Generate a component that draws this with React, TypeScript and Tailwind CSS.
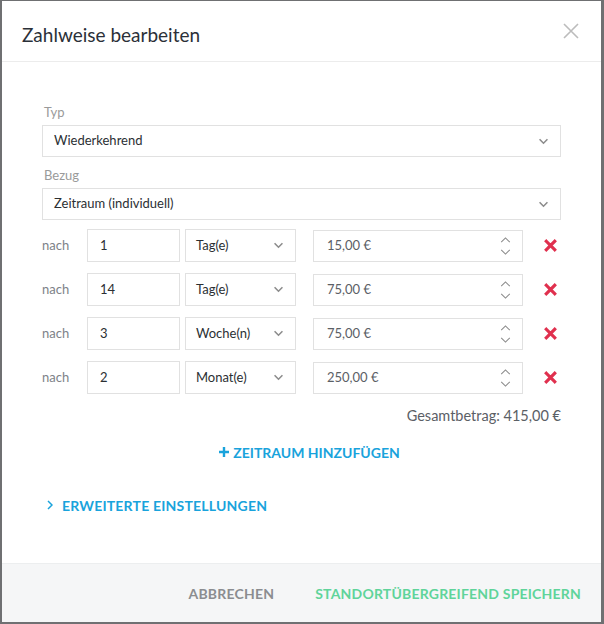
import { useState } from "react";

type Row = { amount: string; unit: string; price: string };

const rows: Row[] = [
  { amount: "1", unit: "Tag(e)", price: "15,00 €" },
  { amount: "14", unit: "Tag(e)", price: "75,00 €" },
  { amount: "3", unit: "Woche(n)", price: "75,00 €" },
  { amount: "2", unit: "Monat(e)", price: "250,00 €" },
];

const ChevronDown = ({ className = "" }: { className?: string }) => (
  <svg viewBox="0 0 12 8" className={className} fill="none" stroke="currentColor" strokeWidth="1.8">
    <path d="M1.5 1.5 6 6l4.5-4.5" />
  </svg>
);

const SelectBox = ({ value, className = "" }: { value: string; className?: string }) => (
  <div className={`flex items-center justify-between border border-[#e1e1e1] bg-white text-[13px] text-[#2b2f33] ${className}`}>
    <span>{value}</span>
    <ChevronDown className="w-[11px] h-[7px] text-[#8c8c8c]" />
  </div>
);

const Spinner = () => (
  <div className="flex flex-col items-center gap-[6px] text-[#8a8a8a]">
    <svg viewBox="0 0 12 7" className="w-[11px] h-[6px]" fill="none" stroke="currentColor" strokeWidth="1.2">
      <path d="M1 6 6 1l5 5" />
    </svg>
    <svg viewBox="0 0 12 7" className="w-[11px] h-[6px]" fill="none" stroke="currentColor" strokeWidth="1.2">
      <path d="M1 1l5 5 5-5" />
    </svg>
  </div>
);

const DeleteIcon = () => (
  <svg viewBox="0 0 14 14" className="w-[13px] h-[13px] text-[#e0304e]" fill="none" stroke="currentColor" strokeWidth="3.4" strokeLinecap="square">
    <path d="M2.5 2.5l9 9M11.5 2.5l-9 9" />
  </svg>
);

export default function App() {
  const [open, setOpen] = useState(false);

  return (
    <div className="w-[604px] h-[624px] bg-[#6f7072] pt-px pl-[2px]" style={{ fontFamily: "Lato, 'Open Sans', sans-serif" }}>
      <div className="w-[599px] h-[621px] bg-white flex flex-col">
        <div className="h-[61px] flex items-center justify-between pl-[20px] pr-[22px] border-b border-[#ececec] shrink-0">
          <h1 className="text-[19px] text-[#2b3038] mt-[8px]">Zahlweise bearbeiten</h1>
          <svg viewBox="0 0 16 16" className="w-[16px] h-[16px] text-[#bcbcbc] -mt-[1px]" fill="none" stroke="currentColor" strokeWidth="1.6">
            <path d="M1 1l14 14M15 1 1 15" />
          </svg>
        </div>

        <div className="flex-1 px-[40px] pt-[41px]">
          <div className="text-[13px] text-[#9a9a9a] pl-[2px] leading-[18px]">Typ</div>
          <SelectBox value="Wiederkehrend" className="mt-[4px] h-[32px] pl-[11px] pr-[11px]" />

          <div className="text-[13px] text-[#9a9a9a] pl-[2px] leading-[18px] mt-[9px]">Bezug</div>
          <SelectBox value="Zeitraum (individuell)" className="mt-[4px] h-[32px] pl-[11px] pr-[11px]" />

          <div className="mt-[9px] flex flex-col gap-[11px]">
            {rows.map((r, i) => (
              <div key={i} className="flex items-center h-[33px]">
                <span className="w-[45px] text-[13px] text-[#7d8288]">nach</span>
                <div className="w-[93px] h-[33px] border border-[#e1e1e1] flex items-center pl-[12px] text-[13px] text-[#2b2f33]">
                  {r.amount}
                </div>
                <SelectBox value={r.unit} className="ml-[5px] w-[111px] h-[33px] pl-[10px] pr-[11px]" />
                <div className="ml-[17px] w-[210px] h-[32px] border border-[#e1e1e1] flex items-center justify-between pl-[13px] pr-[11px] text-[13px] text-[#5b6066]">
                  <span>{r.price}</span>
                  <Spinner />
                </div>
                <div className="ml-[21px]">
                  <DeleteIcon />
                </div>
              </div>
            ))}
          </div>

          <div className="mt-[11px] text-right text-[14.5px] text-[#5b6066]">Gesamtbetrag: 415,00 €</div>

          <div className="mt-[15px] flex justify-center pl-[16px]">
            <button className="flex items-center gap-[4px] text-[14px] font-bold text-[#19a3dc]">
              <svg viewBox="0 0 10 10" className="w-[10px] h-[10px]" fill="currentColor">
                <path d="M3.8 0h2.4v3.8H10v2.4H6.2V10H3.8V6.2H0V3.8h3.8z" />
              </svg>
              ZEITRAUM HINZUFÜGEN
            </button>
          </div>

          <button onClick={() => setOpen(!open)} className="mt-[32px] ml-[5px] flex items-center gap-[9px] text-[14px] font-bold tracking-[0.2px] text-[#19a3dc]">
            <svg viewBox="0 0 6 10" className="w-[6px] h-[10px]" fill="none" stroke="currentColor" strokeWidth="1.5">
              <path d="M1 1l4 4-4 4" />
            </svg>
            ERWEITERTE EINSTELLUNGEN
          </button>
        </div>

        <div className="h-[59px] shrink-0 bg-[#f5f6f7] border-t border-[#eceeef] flex items-center justify-end gap-[41px] pr-[20px]">
          <button className="text-[14px] font-bold tracking-[0.2px] text-[#8b8d90]">ABBRECHEN</button>
          <button className="text-[14px] font-bold tracking-[0.2px] text-[#5fd49a]">STANDORTÜBERGREIFEND SPEICHERN</button>
        </div>
      </div>
    </div>
  );
}
